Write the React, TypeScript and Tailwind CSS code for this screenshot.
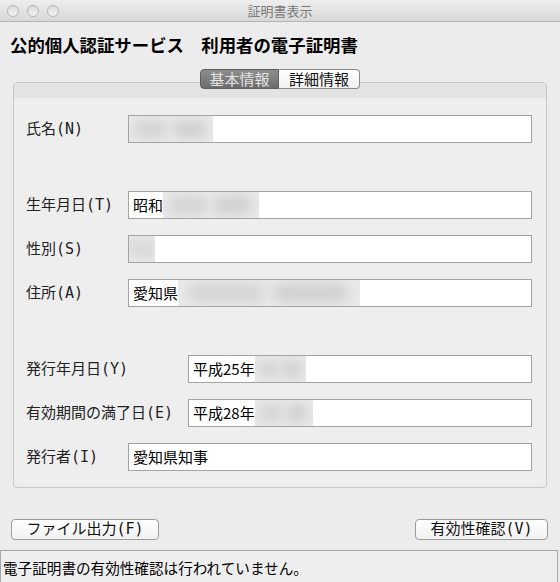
import React from 'react';

const jp = "font-['Noto_Sans_CJK_JP',sans-serif]";
const mono = "font-['DejaVu_Sans_Mono','Noto_Sans_CJK_JP',monospace]";

const Blur: React.FC<{ w: number }> = ({ w }) => (
  <span className="relative inline-block h-full overflow-hidden bg-[#e9e9e9]" style={{ width: w }}>
    <span className="absolute left-[5%] top-[15%] h-[70%] w-[42%] rounded-full bg-[#d4d4d4] blur-[6px]" />
    <span className="absolute left-[52%] top-[15%] h-[70%] w-[42%] rounded-full bg-[#d0d0d0] blur-[6px]" />
  </span>
);

interface RowProps {
  label: string;
  labelW: number;
  mt: string;
  text?: string;
  blur?: number;
}

const Row: React.FC<RowProps> = ({ label, labelW, mt, text, blur }) => (
  <div className={`flex items-center ${mt}`}>
    <div className={`${mono} text-[15px] text-[#222]`} style={{ width: labelW }}>
      {label}
    </div>
    <div className="flex-1 h-[28px] border border-[#a3a3a3] bg-white flex items-stretch">
      {text && (
        <span className={`${jp} text-[15px] text-black pl-[4px] flex items-center`}>{text}</span>
      )}
      {blur ? <Blur w={blur} /> : null}
    </div>
  </div>
);

export default function App() {
  return (
    <div className={`w-[560px] h-[582px] overflow-hidden bg-[#ececec] ${jp}`}>
      {/* title bar */}
      <div className="relative h-[22px] bg-gradient-to-b from-[#eeeeee] to-[#d8d8d8] border-b border-[#b4b4b4] flex items-center justify-center">
        <div className="absolute left-[7px] top-[5px] flex gap-[8px]">
          <span className="w-[12px] h-[12px] rounded-full border border-[#b3b3b3] bg-gradient-to-b from-[#dcdcdc] to-[#f2f2f2]" />
          <span className="w-[12px] h-[12px] rounded-full border border-[#b3b3b3] bg-gradient-to-b from-[#dcdcdc] to-[#f2f2f2]" />
          <span className="w-[12px] h-[12px] rounded-full border border-[#b3b3b3] bg-gradient-to-b from-[#dcdcdc] to-[#f2f2f2]" />
        </div>
        <span className="text-[13px] text-[#7a7a7a]">証明書表示</span>
      </div>

      {/* heading */}
      <div className="h-[46px] flex items-center pl-[10px]">
        <h1 className="text-[17.4px] font-bold text-black">公的個人認証サービス　利用者の電子証明書</h1>
      </div>

      {/* panel */}
      <div className="relative mx-[13px] mt-[14px] h-[406px] border border-[#c6c6c6] rounded-[4px] bg-[#eeeeee]">
        <div className="absolute left-[186px] top-[-14px] flex h-[20px] z-10">
          <div className="w-[79px] flex items-center justify-center rounded-l-[4px] border border-[#5e5e5e] bg-gradient-to-b from-[#8e8e8e] to-[#6c6c6c] text-[15px] text-[#e4e4e4]">
            基本情報
          </div>
          <div className="w-[81px] flex items-center justify-center rounded-r-[4px] border border-l-0 border-[#8a8a8a] bg-gradient-to-b from-white to-[#f0f0f0] text-[15px] text-[#111]">
            詳細情報
          </div>
        </div>
        <div className="h-[15px] bg-[#e3e3e3] rounded-t-[3px]" />
        <div className="pl-[12px] pr-[14px]">
          <Row label="氏名(N)" labelW={102} mt="mt-[17px]" blur={84} />
          <Row label="生年月日(T)" labelW={102} mt="mt-[48px]" text="昭和" blur={96} />
          <Row label="性別(S)" labelW={102} mt="mt-[16px]" blur={26} />
          <Row label="住所(A)" labelW={102} mt="mt-[16px]" text="愛知県" blur={182} />
          <Row label="発行年月日(Y)" labelW={162} mt="mt-[48px]" text="平成25年" blur={51} />
          <Row label="有効期間の満了日(E)" labelW={162} mt="mt-[16px]" text="平成28年" blur={58} />
          <Row label="発行者(I)" labelW={102} mt="mt-[16px]" text="愛知県知事" />
        </div>
      </div>

      {/* buttons */}
      <div className="mt-[31px] pl-[11px] pr-[12px] flex justify-between">
        <button className={`${mono} w-[148px] h-[21px] rounded-[4px] border border-[#9c9c9c] bg-gradient-to-b from-white to-[#f1f1f1] text-[15px] text-[#111] flex items-center justify-center`}>
          ファイル出力(F)
        </button>
        <button className={`${mono} w-[133px] h-[21px] rounded-[4px] border border-[#9c9c9c] bg-gradient-to-b from-white to-[#f1f1f1] text-[15px] text-[#111] flex items-center justify-center`}>
          有効性確認(V)
        </button>
      </div>

      {/* status */}
      <div className="mt-[10px] mr-[2px] h-[34px] border border-[#a6a6a6] bg-[#eeeeee] flex items-start pt-[6px] pl-[2px]">
        <span className="text-[14.6px] text-black">電子証明書の有効性確認は行われていません。</span>
      </div>
    </div>
  );
}
